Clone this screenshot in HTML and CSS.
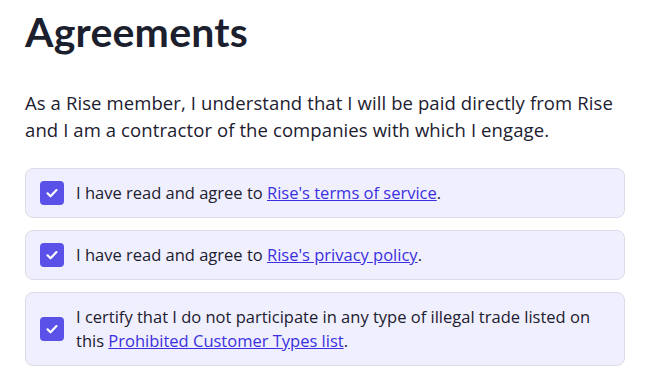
FILE: index.html
```html
<!DOCTYPE html>
<html lang="en">
<head>
<meta charset="utf-8">
<link rel="stylesheet" href="styles.css">
</head>
<body>
<main class="page">
  <h1 class="title">Agreements</h1>
  <p class="intro">As a Rise member, I understand that I will be paid directly from Rise and I am a contractor of the companies with which I engage.</p>
  <div class="list">
    <label class="card">
      <span class="box"><svg viewBox="0 0 24 24" width="24" height="24"><path d="M7.5 12.3l3 3 6-6.2" fill="none" stroke="#fff" stroke-width="2.2" stroke-linecap="round" stroke-linejoin="round"/></svg></span>
      <span class="text">I have read and agree to <a href="#">Rise's terms of service</a>.</span>
    </label>
    <label class="card">
      <span class="box"><svg viewBox="0 0 24 24" width="24" height="24"><path d="M7.5 12.3l3 3 6-6.2" fill="none" stroke="#fff" stroke-width="2.2" stroke-linecap="round" stroke-linejoin="round"/></svg></span>
      <span class="text">I have read and agree to <a href="#">Rise's privacy policy</a>.</span>
    </label>
    <label class="card">
      <span class="box"><svg viewBox="0 0 24 24" width="24" height="24"><path d="M7.5 12.3l3 3 6-6.2" fill="none" stroke="#fff" stroke-width="2.2" stroke-linecap="round" stroke-linejoin="round"/></svg></span>
      <span class="text">I certify that I do not participate in any type of illegal trade listed on this <a href="#">Prohibited Customer Types list</a>.</span>
    </label>
  </div>
</main>
</body>
</html>
```
FILE: styles.css
```css
html, body {
  margin: 0;
  padding: 0;
  background: #ffffff;
}
body {
  font-family: "Open Sans", "Noto Sans", sans-serif;
  color: #1c2030;
}
.page {
  padding: 6px 33px 0 25px;
  width: 600px;
}
.title {
  margin: 0;
  font-family: "Lato", "Noto Sans", sans-serif;
  font-size: 41px;
  font-weight: 700;
  line-height: 52px;
  letter-spacing: 0.2px;
  color: #1b1f2e;
}
.intro {
  margin: 31px 0 0 0;
  font-size: 18.5px;
  line-height: 27px;
  font-weight: 400;
  letter-spacing: 0.1px;
  color: #1c2030;
}
.list {
  margin-top: 25px;
  display: flex;
  flex-direction: column;
  gap: 12px;
}
.card {
  display: flex;
  align-items: center;
  gap: 12px;
  padding: 12px 30px 12px 14px;
  min-height: 24px;
  background: #f0effd;
  border: 1px solid #dcdbe8;
  border-radius: 8px;
}
.box {
  flex: none;
  width: 24px;
  height: 24px;
  border-radius: 4px;
  background: #5a52e8;
  display: flex;
}
.text {
  font-size: 16.5px;
  line-height: 24px;
  color: #1c2030;
}
.text a {
  color: #3b2fe0;
  text-decoration: underline;
}
```
